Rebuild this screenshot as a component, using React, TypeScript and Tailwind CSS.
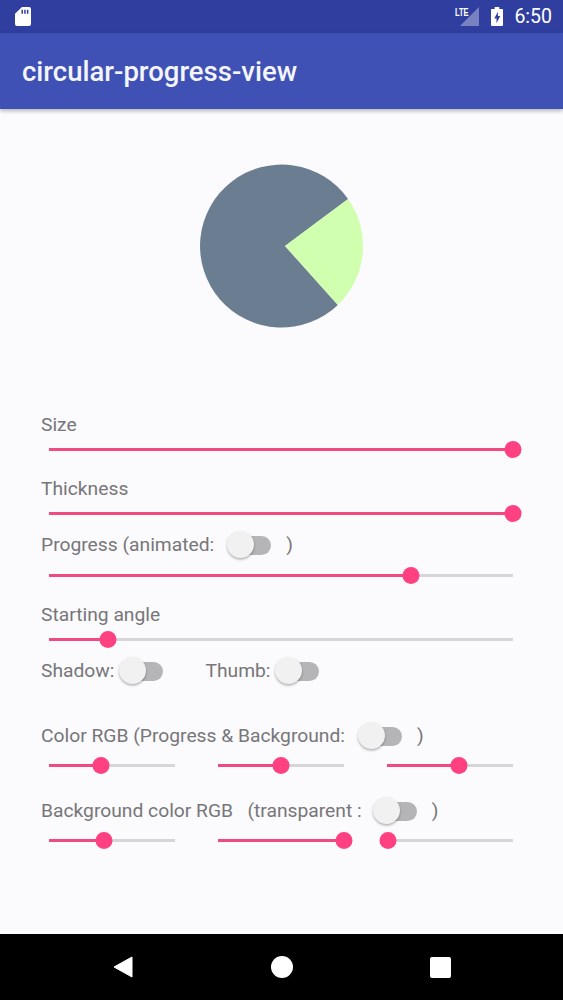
import React from "react";

function Slider({ pct, className }: { pct: number; className: string }) {
  return (
    <div className={`relative flex h-[22px] items-center ${className}`}>
      <div className="h-[3px] w-full bg-[#d6d5d8]" />
      <div className="absolute left-0 h-[3px] bg-[#f04b80]" style={{ width: `${pct}%` }} />
      <div
        className="absolute h-[17px] w-[17px] -translate-x-1/2 rounded-full bg-[#ff4081]"
        style={{ left: `${pct}%` }}
      />
    </div>
  );
}

function Switch({ className = "" }: { className?: string }) {
  return (
    <div className={`relative h-[28px] w-[44px] shrink-0 ${className}`}>
      <div className="absolute left-[8px] right-0 top-[4.5px] h-[19px] rounded-full bg-[#b5b4b6]" />
      <div className="absolute left-0 top-0 h-[27px] w-[27px] rounded-full bg-[#f1f1f1] shadow-[0_1.5px_2.5px_rgba(0,0,0,0.3)]" />
    </div>
  );
}

function Label({ children }: { children: React.ReactNode }) {
  return <div className="flex h-[26px] items-center pt-[1px]">{children}</div>;
}

export default function App() {
  return (
    <div className="flex h-[1000px] w-[563px] flex-col overflow-hidden bg-[#fbfafd] font-['Roboto',sans-serif] text-[19.25px] text-[#777678]">
      <div className="flex h-[33px] items-center bg-[#303f9f] pl-[15px] pr-[11px] text-white">
        <svg width="16" height="19" viewBox="0 0 16 20" preserveAspectRatio="none" className="mr-auto">
          <path
            fill="#fff"
            fillRule="evenodd"
            d="M7 0H14a2 2 0 0 1 2 2V18a2 2 0 0 1-2 2H2a2 2 0 0 1-2-2V7ZM6.5 3V7H8V3ZM9.2 3V7H10.7V3ZM11.9 3V7H13.4V3Z"
          />
        </svg>
        <div className="relative mr-[12px] h-[19px] w-[24px]">
          <svg width="19" height="19" viewBox="0 0 19 19" className="absolute right-0 top-0">
            <path fill="#fff" fillOpacity="0.35" d="M19 0V19H0Z" />
          </svg>
          <span className="absolute left-0 top-[-1px] origin-left font-['Liberation_Sans',sans-serif] text-[11px] font-bold leading-[12px] text-white [transform:scaleX(0.68)]">
            LTE
          </span>
        </div>
        <svg width="12" height="19" viewBox="0 0 13 20" preserveAspectRatio="none" className="mr-[11px]">
          <path
            fill="#fff"
            fillRule="evenodd"
            d="M4 0H9V2H12a1 1 0 0 1 1 1V19a1 1 0 0 1-1 1H1a1 1 0 0 1-1-1V3a1 1 0 0 1 1-1H4ZM7.5 5 3.5 12H6V17L10 9.5H7.5Z"
          />
        </svg>
        <span className="text-[19.5px] leading-none">6:50</span>
      </div>

      <div className="relative z-10 flex h-[76px] items-center bg-[#3f51b5] pl-[22px] pt-[1px] text-[27.5px] font-medium text-[#f4f5fb] shadow-[0_2px_4px_rgba(0,0,0,0.28)]">
        circular-progress-view
      </div>

      <div className="flex flex-1 flex-col pl-[41px] pr-[50px]">
        <div className="ml-[-41px] mr-[-50px] flex justify-start pl-[200px] pt-[56px]">
          <svg width="163" height="162" viewBox="0 0 163 162" className="overflow-visible">
            <path d="M85 81 148.1 34A81.5 81.5 0 1 0 137.9 139.9Z" fill="#6b7d91" />
            <path d="M85 81 148.1 34A81.5 81.5 0 0 1 137.9 139.9Z" fill="#d0ffb0" />
          </svg>
        </div>

        <div className="mt-[85px]">
          <Label>Size</Label>
        </div>
        <Slider pct={100} className="ml-[8px]" />

        <div className="mt-[16px]">
          <Label>Thickness</Label>
        </div>
        <Slider pct={100} className="ml-[8px]" />

        <div className="mt-[7px] flex h-[28px] items-center">
          <span>Progress (animated:</span>
          <Switch className="ml-[13px]" />
          <span className="ml-[15px]">)</span>
        </div>
        <Slider pct={78} className="ml-[8px] mt-[5px]" />

        <div className="mt-[16px]">
          <Label>Starting angle</Label>
        </div>
        <Slider pct={12.7} className="ml-[8px]" />

        <div className="mt-[7px] flex h-[28px] items-center">
          <span className="pt-[1px]">Shadow:</span>
          <Switch className="ml-[5px]" />
          <span className="ml-[42px] pt-[1px]">Thumb:</span>
          <Switch className="ml-[4px]" />
        </div>

        <div className="mt-[37px] flex h-[28px] items-center">
          <span>Color RGB (Progress &amp; Background:</span>
          <Switch className="ml-[13px]" />
          <span className="ml-[15px]">)</span>
        </div>
        <div className="ml-[8px] mt-[4px] flex justify-between">
          <Slider pct={41} className="w-[126px]" />
          <Slider pct={50} className="w-[126px]" />
          <Slider pct={57} className="w-[126px]" />
        </div>

        <div className="mt-[21px] flex h-[28px] items-center">
          <span className="whitespace-pre">Background color RGB   (transparent :</span>
          <Switch className="ml-[11px]" />
          <span className="ml-[15px]">)</span>
        </div>
        <div className="ml-[8px] mt-[4px] flex justify-between">
          <Slider pct={44} className="w-[126px]" />
          <Slider pct={100} className="w-[126px]" />
          <Slider pct={1} className="w-[126px]" />
        </div>
      </div>

      <div className="flex h-[66px] items-center bg-black pl-[113px] pr-[112px]">
        <svg width="20" height="22" viewBox="0 0 20 22">
          <path d="M19 1V21L1 11Z" fill="#fff" stroke="#fff" strokeLinejoin="round" strokeWidth="1" />
        </svg>
        <div className="ml-[138px] h-[22px] w-[22px] rounded-full bg-white" />
        <div className="ml-auto h-[21px] w-[21px] rounded-[2px] bg-white" />
      </div>
    </div>
  );
}
